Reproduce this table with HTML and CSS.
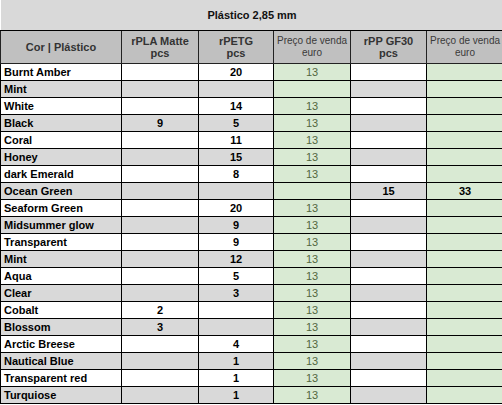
FILE: index.html
```html
<!DOCTYPE html>
<html lang="pt">
<head>
<meta charset="utf-8">
<title>Plástico 2,85 mm</title>
<link rel="stylesheet" href="styles.css">
</head>
<body>
<table class="sheet">
  <colgroup>
    <col class="c1"><col class="c2"><col class="c3"><col class="c4"><col class="c5"><col class="c6">
  </colgroup>
  <thead>
    <tr class="title-row"><th colspan="6" class="title">Plástico 2,85 mm</th></tr>
    <tr class="head-row">
      <th class="h-bold">Cor | Plástico</th>
      <th class="h-bold">rPLA Matte<br>pcs</th>
      <th class="h-bold">rPETG<br>pcs</th>
      <th class="h-norm">Preço de venda<br>euro</th>
      <th class="h-bold">rPP GF30<br>pcs</th>
      <th class="h-norm">Preço de venda<br>euro</th>
    </tr>
  </thead>
  <tbody>
    <tr><td class="name">Burnt Amber</td><td></td><td>20</td><td class="price">13</td><td></td><td class="price"></td></tr>
    <tr class="alt"><td class="name">Mint</td><td></td><td></td><td class="price"></td><td></td><td class="price"></td></tr>
    <tr><td class="name">White</td><td></td><td>14</td><td class="price">13</td><td></td><td class="price"></td></tr>
    <tr class="alt"><td class="name">Black</td><td>9</td><td>5</td><td class="price">13</td><td></td><td class="price"></td></tr>
    <tr><td class="name">Coral</td><td></td><td>11</td><td class="price">13</td><td></td><td class="price"></td></tr>
    <tr class="alt"><td class="name">Honey</td><td></td><td>15</td><td class="price">13</td><td></td><td class="price"></td></tr>
    <tr><td class="name">dark Emerald</td><td></td><td>8</td><td class="price">13</td><td></td><td class="price"></td></tr>
    <tr class="alt"><td class="name">Ocean Green</td><td></td><td></td><td class="price"></td><td>15</td><td class="price strong">33</td></tr>
    <tr><td class="name">Seaform Green</td><td></td><td>20</td><td class="price">13</td><td></td><td class="price"></td></tr>
    <tr class="alt"><td class="name">Midsummer glow</td><td></td><td>9</td><td class="price">13</td><td></td><td class="price"></td></tr>
    <tr><td class="name">Transparent</td><td></td><td>9</td><td class="price">13</td><td></td><td class="price"></td></tr>
    <tr class="alt"><td class="name">Mint</td><td></td><td>12</td><td class="price">13</td><td></td><td class="price"></td></tr>
    <tr><td class="name">Aqua</td><td></td><td>5</td><td class="price">13</td><td></td><td class="price"></td></tr>
    <tr class="alt"><td class="name">Clear</td><td></td><td>3</td><td class="price">13</td><td></td><td class="price"></td></tr>
    <tr><td class="name">Cobalt</td><td>2</td><td></td><td class="price">13</td><td></td><td class="price"></td></tr>
    <tr class="alt"><td class="name">Blossom</td><td>3</td><td></td><td class="price">13</td><td></td><td class="price"></td></tr>
    <tr><td class="name">Arctic Breese</td><td></td><td>4</td><td class="price">13</td><td></td><td class="price"></td></tr>
    <tr class="alt"><td class="name">Nautical Blue</td><td></td><td>1</td><td class="price">13</td><td></td><td class="price"></td></tr>
    <tr><td class="name">Transparent red</td><td></td><td>1</td><td class="price">13</td><td></td><td class="price"></td></tr>
    <tr class="alt"><td class="name">Turquiose</td><td></td><td>1</td><td class="price">13</td><td></td><td class="price"></td></tr>
  </tbody>
</table>
</body>
</html>
```

FILE: styles.css
```css
html, body {
  margin: 0;
  padding: 0;
  background: #ffffff;
}

body {
  font-family: "Liberation Sans", Arial, sans-serif;
  font-size: 11px;
  color: #000;
}

.sheet {
  border-collapse: collapse;
  table-layout: fixed;
  width: 503px;
}

.c1 { width: 121px; }
.c2 { width: 77px; }
.c3 { width: 75px; }
.c4 { width: 77px; }
.c5 { width: 76px; }
.c6 { width: 77px; }

.title-row th {
  height: 30px;
  padding: 0;
  background: #d9d9d9;
  border-bottom: 1px solid #000;
  font-weight: bold;
  font-size: 11px;
  color: #111;
  text-align: center;
  vertical-align: middle;
}

.head-row th {
  height: 32px;
  padding: 0;
  background: #c0c0c0;
  border: 1px solid #222;
  border-top: 1px solid #000;
  text-align: center;
  vertical-align: middle;
  line-height: 12px;
  font-size: 11px;
  color: #333;
  white-space: nowrap;
  overflow: hidden;
}

.head-row th.h-norm {
  font-weight: normal;
  font-size: 10px;
  color: #3a3a3a;
}

.h-bold { font-weight: bold; }

tbody td {
  height: 16px;
  padding: 0 3px;
  border: 1px solid #000;
  background: #ffffff;
  font-weight: bold;
  text-align: center;
  vertical-align: middle;
  line-height: 14px;
  white-space: nowrap;
  overflow: hidden;
}

tbody tr.alt td {
  background: #d9d9d9;
}

tbody td.name {
  text-align: left;
  padding-left: 3px;
}

tbody td.price,
tbody tr.alt td.price {
  background: #d9ead3;
  font-weight: normal;
  color: #52663f;
}

tbody tr td.price.strong,
tbody tr.alt td.price.strong {
  font-weight: bold;
  color: #000;
}
```
